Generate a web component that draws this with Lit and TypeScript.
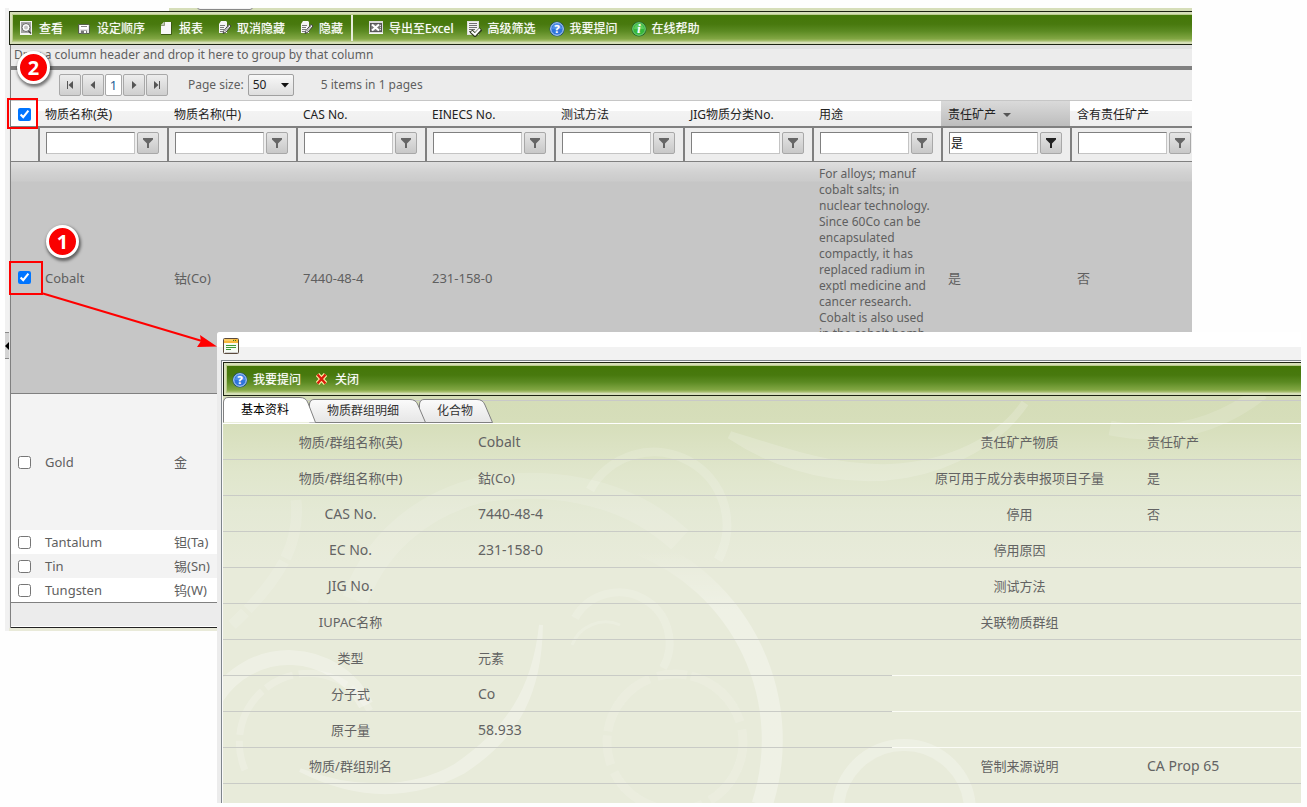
import { LitElement, html, svg, css, nothing, TemplateResult } from "lit";
import { customElement, property, state } from "lit/decorators.js";
import { classMap } from "lit/directives/class-map.js";

const ICONS: Record<string, TemplateResult> = {
  view: svg`
    <rect x="2" y="0" width="12" height="14" fill="#f4f4f4"/>
    <rect x="3" y="1" width="10" height="11" fill="#a4a4a4"/>
    <circle cx="8" cy="6.500" r="4" fill="#fff" stroke="#6a6a6a"/>
    <circle cx="8" cy="6.500" r="2" fill="#c4c4c4"/>
    <path d="M10.500 10l2.500 2.500" stroke="#444" stroke-width="1.400"/>`,
  save: svg`
    <path d="M2.500 3.500h10l1 1v8h-11z" fill="#e6e6e6" stroke="#55604a"/>
    <rect x="4" y="4" width="8" height="4" fill="#fff"/>
    <path d="M5 5.500h6" stroke="#888"/>
    <rect x="5" y="9.500" width="6" height="3" fill="#777"/>
    <rect x="8" y="10" width="2" height="2" fill="#fff"/>`,
  report: svg`
    <path d="M6 1h7v12H3V4z" fill="#f7f7f7"/>
    <path d="M3 4.500h3.500V1" fill="#bfc6b4" stroke="#7c8a66" stroke-width=".8"/>
    <path d="M13.500 1v12.500H3" fill="none" stroke="#3c5a14" stroke-width="1"/>`,
  edit: svg`
    <path d="M5 0h5l1 1v11H3V3z" fill="#f5f5f5"/>
    <path d="M4 4.500h5M4 6.500h4M4 8.500h4M4 10.500h3" stroke="#7b7b7b"/>
    <path d="M7 12.500l1-3 5-6 2 1.500-5 6z" fill="#fff" stroke="#333" stroke-width=".9"/>
    <path d="M9 10l4-5" stroke="#999"/>`,
  excel: svg`
    <rect x="1" y="0" width="14" height="13" fill="#dadada"/>
    <rect x="2.500" y="2.500" width="11" height="8" fill="#777" stroke="#555"/>
    <path d="M4 3.500l7 6M11 3.500l-7 6" stroke="#fff" stroke-width="2"/>
    <path d="M12 4.500h1M12 6.500h1M12 8.500h1" stroke="#ddd"/>
    <path d="M1 12.500h14" stroke="#f8f8f8"/>`,
  filter: svg`
    <rect x="1.500" y=".5" width="11" height="13" fill="#f3f3f3" stroke="#ddd"/>
    <path d="M3 2.500h8M3 4.500h8M3 6.500h8M3 8.500h6M3 10.500h3" stroke="#707070"/>
    <path d="M5 10l4 4 6-6" fill="none" stroke="#2e3b1e" stroke-width="4"/>
    <path d="M5.500 10.500l3.500 3 5-5.500" fill="none" stroke="#fff" stroke-width="2"/>`,
  help: svg`
    <circle cx="8" cy="8" r="7.500" fill="#1c4f83"/>
    <circle cx="8" cy="8" r="6.300" fill="#2f74dc" stroke="#c4dcfa"/>
    <path d="M3 8a5 5 0 0 1 10 0z" fill="#6ea8f5" opacity=".5"/>
    <text x="8" y="12" text-anchor="middle" class="glyph">?</text>`,
  info: svg`
    <circle cx="8" cy="8" r="7.500" fill="#1d6a2b"/>
    <circle cx="8" cy="8" r="6.300" fill="#35b83c" stroke="#8fdc8c" stroke-width=".8"/>
    <path d="M3 8a5 5 0 0 1 10 0z" fill="#7fe07c" opacity=".5"/>
    <text x="8" y="12" text-anchor="middle" class="glyph serif">i</text>`,
  close: svg`
    <path d="M3.500 2.500l8 9M11.500 2.500l-8 9" stroke="#fff3a0" stroke-width="4.600" />
    <path d="M3.500 2.500l8 9M11.500 2.500l-8 9" stroke="#d81c0c" stroke-width="2.400"/>`,
  window: svg`
    <rect x=".5" y=".5" width="15" height="15" rx="1" fill="#f7fbf5" stroke="#5b4a3c"/>
    <rect x="1" y="1" width="14" height="4" fill="#f7b93c"/>
    <path d="M1 2h9" stroke="#ffdf8d"/>
    <path d="M10 2.500h1M12 2.500h1" stroke="#3f7a1a"/>
    <path d="M3 7.500h10M3 9.500h10M3 11.500h5" stroke="#3c9a35"/>
    <path d="M2 14.500h13" stroke="#cfcfcf"/>`,
  first: svg`<path d="M5.500 4v8" stroke="#555" /><path d="M11 4v8L6.500 8z" fill="#555"/>`,
  prev: svg`<path d="M10 4v8L5.500 8z" fill="#555"/>`,
  next: svg`<path d="M6 4v8L10.500 8z" fill="#555"/>`,
  last: svg`<path d="M10.500 4v8" stroke="#555"/><path d="M5 4v8L9.500 8z" fill="#555"/>`,
  funnel: svg`<path d="M3 3h10v1.500L9 8.500V13H7V8.500L3 4.500z" fill="currentColor"/>`,
  sort: svg`<path d="M4 6h8l-4 4z" fill="#555"/>`,
  drop: svg`<path d="M4 6h8l-4 4.500z" fill="#111"/>`,
};

const icon = (name: string) => html`<svg class="icon" viewBox="0 0 16 16" width="16" height="16" aria-hidden="true">${ICONS[name]}</svg>`;

const FONT = css`
  * { box-sizing: border-box; }
  button, input, select { font: inherit; color: inherit; margin: 0; }
  .icon { display: block; flex: none; }
  .glyph { font: bold 11px "Open Sans", "Noto Sans", sans-serif; fill: #fff; }
  .glyph.serif { font: italic bold 12px "Liberation Serif", serif; }
`;

interface Tool { icon: string; label: string; }

@customElement("tool-bar")
export class ToolBar extends LitElement {
  @property({ attribute: false }) groups: Tool[][] = [];
  static styles = [FONT, css`
    :host { display: block; }
    .frame { border: 1px solid #1d2412; border-right: 0; background: #d6dfb8; padding: 2px 0 2px 2px; }
    .green {
      display: flex; align-items: stretch; height: 28px; overflow: hidden;
      border: 1px solid #b9cb8c; border-right: 0; padding-left: 5px;
      background: linear-gradient(#447708, #48790e 35%, #5b8a22 62%, #82a744 92%, #a9c070);
    }
    .group { display: flex; gap: 13px; }
    .group + .group { margin-left: 8px; padding-left: 15px; border-left: 2px solid #e8eddc; }
    button {
      display: flex; align-items: center; gap: 5px; padding: 1px 0 0; border: 0; background: none;
      color: #fff; font-size: 12px; line-height: 16px; white-space: nowrap; cursor: pointer;
      text-shadow: 0 0 1px rgba(255, 255, 255, 0.6);
    }
  `];
  render() {
    return html`<div class="frame"><div class="green" role="toolbar">
      ${this.groups.map((g) => html`<div class="group">
        ${g.map((t) => html`<button type="button">${icon(t.icon)}<span>${t.label}</span></button>`)}
      </div>`)}
    </div></div>`;
  }
}

interface Row { kind: string; en: string; cn: string; cas?: string; ec?: string; use?: string; duty?: string; has?: string; }

const COLUMNS = ["物质名称(英)", "物质名称(中)", "CAS No.", "EINECS No.", "测试方法", "JIG物质分类No.", "用途", "责任矿产", "含有责任矿产"];
const SORTED = 7;

const ROWS: Row[] = [
  {
    kind: "tall", en: "Cobalt", cn: "钴(Co)", cas: "7440-48-4", ec: "231-158-0", duty: "是", has: "否",
    use: "For alloys; manuf cobalt salts; in nuclear technology. Since 60Co can be encapsulated compactly, it has replaced radium in exptl medicine and cancer research. Cobalt is also used in the cobalt bomb",
  },
  { kind: "medium", en: "Gold", cn: "金" },
  { kind: "plain", en: "Tantalum", cn: "钽(Ta)" },
  { kind: "plain", en: "Tin", cn: "锡(Sn)" },
  { kind: "plain", en: "Tungsten", cn: "钨(W)" },
];

@customElement("substance-grid")
export class SubstanceGrid extends LitElement {
  @state() private picked = new Set<number>([0]);
  static styles = [FONT, css`
    :host { display: block; color: #5f5f5f; font-size: 13px; line-height: 16px; }
    .drop { height: 21px; padding: 2px 3px 0; background: linear-gradient(#e1e1e1 4px, #ececec 4px); white-space: nowrap; font-size: 12px; line-height: 16px; }
    .pager { display: flex; align-items: center; height: 35px; padding-left: 48px; border-top: 4px solid #808080; border-bottom: 1px solid #c6c6c6; background: #ececec; white-space: nowrap; }
    .pages { display: flex; gap: 1px; }
    .page { width: 22px; height: 22px; padding: 0 2px; border: 1px solid #a8a8a8; border-radius: 2px; background: linear-gradient(#ededed, #cfcfcf); }
    .page.now { width: 17px; padding: 0; background: #fff; color: #1e5f96; text-align: center; }
    .size { display: flex; align-items: center; gap: 4px; margin-left: 20px; font-size: 12px; }
    .pick { position: relative; width: 46px; height: 22px; }
    .pick select { width: 100%; height: 100%; padding: 0 4px; appearance: none; border: 1px solid #a0a0a0; border-radius: 2px; background: linear-gradient(#f8f8f8, #dedede); color: #222; font-size: 12px; }
    .pick .icon { position: absolute; right: 1px; top: 3px; pointer-events: none; }
    .count { margin-left: 27px; font-size: 12px; }
    .clip { overflow: hidden; }
    table { table-layout: fixed; border-collapse: separate; border-spacing: 0; width: 0; }
    .c-tick { width: 27px; }
    .c-data { width: 129px; }
    th, td { padding: 0 7px; text-align: left; font-weight: normal; vertical-align: middle; }
    .tick { padding: 0; text-align: center; }
    .tick input { display: block; width: 13px; height: 13px; margin: 0 7px; }
    .heads th { height: 27px; padding-top: 2px; border-bottom: 2px solid #808080; background: linear-gradient(#fff 0 10px, #f3f3f3 10px, #efefef); color: #222; font-size: 12px; white-space: nowrap; }
    .heads .tick { background: #fff; }
    .heads .sorted { background: linear-gradient(#dadada, #bdbdbd); }
    .label { display: flex; align-items: center; gap: 3px; }
    .filters td { height: 34px; padding: 0 6px 3px; border-left: 2px solid #808080; border-bottom: 1px solid #808080; background: #ededed; }
    .filters .tick { border-left: 0; }
    .filter { display: flex; gap: 2px; }
    .filter input { width: 89px; height: 22px; padding: 0 1px; border: 1px solid #c4c4c4; border-top-color: #808080; border-left-color: #808080; background: #fff; color: #111; font-size: 12px; }
    .filter button { width: 22px; height: 22px; padding: 0 2px; border: 1px solid #a8a8a8; border-radius: 2px; background: linear-gradient(#e6e6e6, #c8c8c8); color: #666; }
    .filter .on { color: #222; }
    .plain td { height: 24px; background: #fff; }
    .plain:nth-child(even) td { background: #f3f3f3; }
    .medium td { height: 136px; background: #f3f3f3; }
    .tall td { height: 232px; border-bottom: 1px solid #808080; background: linear-gradient(#dfdfdf, #d2d2d2 10px, #cbcbcb 19px, #c6c6c6 20px); }
    .tall .use { padding-top: 4px; vertical-align: top; font-size: 12px; }
    .foot { height: 26px; border-top: 1px solid #808080; border-bottom: 1px solid #222; background: #ececec; box-shadow: inset 0 -1px #fff; }
  `];
  private toggle(i: number) {
    const next = new Set(this.picked);
    next.has(i) ? next.delete(i) : next.add(i);
    this.picked = next;
  }
  render() {
    return html`
      <div class="drop">Drag a column header and drop it here to group by that column</div>
      <div class="pager">
        <div class="pages">
          <button class="page" type="button" aria-label="First">${icon("first")}</button>
          <button class="page" type="button" aria-label="Previous">${icon("prev")}</button>
          <button class="page now" type="button">1</button>
          <button class="page" type="button" aria-label="Next">${icon("next")}</button>
          <button class="page" type="button" aria-label="Last">${icon("last")}</button>
        </div>
        <div class="size">
          <label for="size">Page size:</label>
          <div class="pick"><select id="size"><option>50</option></select>${icon("drop")}</div>
        </div>
        <div class="count">5 items in 1 pages</div>
      </div>
      <div class="clip">
        <table>
          <colgroup><col class="c-tick">${COLUMNS.map(() => html`<col class="c-data">`)}</colgroup>
          <thead>
            <tr class="heads">
              <th class="tick"><input type="checkbox" aria-label="All" checked></th>
              ${COLUMNS.map((c, i) => html`<th class=${classMap({ sorted: i === SORTED })}>
                <span class="label">${c}${i === SORTED ? icon("sort") : nothing}</span></th>`)}
            </tr>
            <tr class="filters">
              <td class="tick"></td>
              ${COLUMNS.map((c, i) => html`<td><div class="filter">
                <input type="text" aria-label=${c} .value=${i === SORTED ? "是" : ""}>
                <button type="button" aria-label="Filter" class=${classMap({ on: i === SORTED })}>${icon("funnel")}</button>
              </div></td>`)}
            </tr>
          </thead>
          <tbody>
            ${ROWS.map((r, i) => html`<tr class=${r.kind}>
              <td class="tick"><input type="checkbox" aria-label=${r.en} .checked=${this.picked.has(i)} @change=${() => this.toggle(i)}></td>
              <td>${r.en}</td><td>${r.cn}</td><td>${r.cas}</td><td>${r.ec}</td><td></td><td></td>
              <td class="use">${r.use}</td><td>${r.duty}</td><td>${r.has}</td>
            </tr>`)}
          </tbody>
        </table>
      </div>
      <div class="foot"></div>`;
  }
}

interface Field { label: string; value?: string; }
const FIELDS: [Field, Field | null][] = [
  [{ label: "物质/群组名称(英)", value: "Cobalt" }, { label: "责任矿产物质", value: "责任矿产" }],
  [{ label: "物质/群组名称(中)", value: "鈷(Co)" }, { label: "原可用于成分表申报项目子量", value: "是" }],
  [{ label: "CAS No.", value: "7440-48-4" }, { label: "停用", value: "否" }],
  [{ label: "EC No.", value: "231-158-0" }, { label: "停用原因" }],
  [{ label: "JIG No." }, { label: "测试方法" }],
  [{ label: "IUPAC名称" }, { label: "关联物质群组" }],
  [{ label: "类型", value: "元素" }, null],
  [{ label: "分子式", value: "Co" }, null],
  [{ label: "原子量", value: "58.933" }, null],
  [{ label: "物质/群组别名" }, { label: "管制来源说明", value: "CA Prop 65" }],
];
const TABS = ["基本资料", "物质群组明细", "化合物"];

@customElement("detail-window")
export class DetailWindow extends LitElement {
  @state() private tab = 0;
  static styles = [FONT, css`
    :host { display: flex; flex-direction: column; background: #ececec; border-radius: 3px 0 0 0; overflow: hidden; color: #636363; }
    .title { height: 28px; padding: 6px; background: linear-gradient(#fff 0 15px, #f2f2f2 15px); flex: none; }
    .body { position: relative; flex: 1; margin-left: 4px; border: solid #7f868c; border-width: 1px 0 0 1px; padding: 1px 0 0 1px; background: #fafafa; overflow: hidden; display: flex; }
    .sheet { position: relative; flex: 1; min-width: 0; background: linear-gradient(#d3dbb4, #d6deba 60px, #e0e6cc 110px, #e4e9d5 150px, #e8ebda 200px); }
    .swirl { position: absolute; inset: 0; width: 100%; height: 100%; }
    .content { position: relative; }
    .tabs { display: flex; align-items: flex-end; height: 28px; border-bottom: 1px solid #fff; background: linear-gradient(#c9c9c9, #c9c9c9) 0 4px / 100% 1px no-repeat; }
    .tab { position: relative; height: 24px; padding: 0 20px 0 18px; border: 0; background: none; color: #333; font-size: 12px; line-height: 24px; white-space: nowrap; z-index: 1; }
    .tab:nth-child(1) { z-index: 3; }
    .tab:nth-child(2) { z-index: 2; }
    .tab:last-child { padding-right: 13px; }
    .tab.on { height: 26px; color: #000; }
    .tab .shape { position: absolute; left: 0; bottom: 0; overflow: visible; }
    .tab span { position: relative; }
    .form { width: 100%; table-layout: fixed; border-spacing: 0; font-size: 13px; line-height: 18px; }
    .form .c-label { width: 255px; }
    .form .c-left { width: 414px; }
    .form th, .form td { height: 36px; padding: 0; border-bottom: 1px solid #c9cbc6; font-weight: normal; white-space: nowrap; }
    .form td { text-align: left; }
    .form .void { border-bottom-color: #fbfcf6; }
    .form .latin { font-size: 14px; }
  `];
  private cell(text?: string) {
    return classMap({ latin: !!text && /^[\x20-\x7e]+$/.test(text) });
  }
  render() {
    return html`
      <div class="title">${icon("window")}</div>
      <div class="body"><div class="sheet">
        <svg class="swirl" aria-hidden="true">
          <defs>
            <linearGradient id="fade" gradientUnits="userSpaceOnUse" x1="0" y1="550" x2="0" y2="610">
              <stop offset="0" stop-color="#fff" stop-opacity="0"/><stop offset="1" stop-color="#fff"/>
            </linearGradient>
          </defs>
          <g transform="translate(-223 -362)" fill="none" stroke="#fff">
            <path d="M640 545A210 210 0 0 1 762 805" stroke="url(#fade)" stroke-width="21" opacity=".3"/>
            <path d="M215 700A86 86 0 0 1 366 705" stroke-width="15" opacity=".28"/>
            <path d="M541 625C540 690 520 735 463 772C410 800 355 798 300 770C350 790 410 792 455 766C508 730 534 690 541 625z" fill="#fff" stroke-width="4" opacity=".27"/>
            <circle cx="675" cy="742" r="68" stroke-width="9" stroke-dasharray="70 8 30 4" opacity=".13"/>
            <path d="M575 618A50 50 0 0 1 663 668" stroke-width="8" opacity=".15"/>
            <path d="M572 645A36 36 0 0 1 620 625" stroke-width="3" opacity=".15"/>
            <circle cx="904" cy="811" r="66" stroke-width="12" opacity=".24"/>
            <path d="M245 770A68 68 0 0 1 372 715" stroke-width="7" stroke-dasharray="30 6 50 5" opacity=".18"/>
            <path d="M296 500C300 540 285 575 232 625" stroke-width="11" stroke-dasharray="60 4" opacity=".12"/>
            <path d="M355 600C375 545 420 505 480 490C540 480 620 485 680 540" stroke-width="26" opacity=".12"/>
            <path d="M590 490A56 56 0 0 1 718 560" stroke-width="9" opacity=".15"/>
            <path d="M730 435C790 475 870 490 940 465C990 445 1010 425 1025 403C1000 440 950 465 890 468C830 470 780 450 730 435z" fill="#fff" stroke-width="8" opacity=".17"/>
            <path d="M1110 428C1170 440 1220 425 1262 392" stroke-width="15" opacity=".14"/>
            <path d="M920 365C870 400 780 395 720 372" stroke-width="8" opacity=".08"/>
          </g>
        </svg>
        <div class="content">
          <tool-bar .groups=${[[{ icon: "help", label: "我要提问" }, { icon: "close", label: "关闭" }]]}></tool-bar>
          <div class="tabs" role="tablist">
            ${TABS.map((t, i) => {
              const w = t.length * 12 + (i === TABS.length - 1 ? 31 : 38);
              const on = i === this.tab;
              const h = on ? 26 : 24;
              return html`<button class=${classMap({ tab: true, on })} type="button" role="tab" aria-selected=${on} @click=${() => (this.tab = i)}>
                <svg class="shape" width=${w} height=${h} aria-hidden="true">
                  <defs><linearGradient id="g" x1="0" y1="0" x2="0" y2="1"><stop offset="0" stop-color="#fbfbfb"/><stop offset="1" stop-color="#e6e6e6"/></linearGradient></defs>
                  <path d="M.5 ${h - 0.5}V5Q1 .5 5 .5H${w - 9}Q${w - 3} .5 ${w - 1} 6L${w + 6.5} ${h - 0.5}${on ? "" : "Z"}"
                    fill=${on ? "#fff" : "url(#g)"} stroke="#808080"/>
                </svg><span>${t}</span></button>`;
            })}
          </div>
          <table class="form">
            <colgroup><col class="c-label"><col class="c-left"><col class="c-label"><col></colgroup>
            <tbody>
              ${FIELDS.map(([a, b]) => html`<tr>
                <th scope="row" class=${this.cell(a.label)}>${a.label}</th><td class=${this.cell(a.value)}>${a.value}</td>
                ${b ? html`<th scope="row" class=${this.cell(b.label)}>${b.label}</th><td class=${this.cell(b.value)}>${b.value}</td>`
                    : html`<td class="void" colspan="2"></td>`}
              </tr>`)}
            </tbody>
          </table>
        </div>
      </div></div>`;
  }
}

@customElement("app-root")
export class AppRoot extends LitElement {
  static styles = [FONT, css`
    :host { display: block; position: relative; min-height: 100vh; overflow: hidden; background: #fefefe; font-family: "Noto Sans", "Noto Sans CJK SC", sans-serif; }
    .panel { display: flex; margin: 0 115px 0 5px; padding-top: 8px; }
    .rail { flex: none; width: 4px; position: relative; background: #f1f1f1; }
    .grip { position: absolute; top: 324px; left: 0; width: 4px; height: 27px; padding: 0; border: solid #8a8a8a; border-width: 1px 0; background: #d4d4d4; }
    .grip svg { display: block; }
    .main { flex: 1; min-width: 0; background: #ececec; }
    .crumbs { display: flex; height: 3px; background: #d6deb9; overflow: hidden; }
    .blank { width: 160px; background: #fefefe; }
    .nub { width: 56px; height: 6px; margin: -4px 0 0 28px; border: 1px solid #888; border-radius: 3px; background: #f4f4f4; }
    .grid { border-left: 1px solid #808080; margin-left: 1px; }
    .tail { height: 3px; background: #e9ead9; }
    detail-window { position: absolute; top: 332px; left: 217px; right: 6px; bottom: 4px; }
    .mark { position: absolute; border: 2px solid #f00; pointer-events: none; }
    .mark.all { left: 7px; top: 98px; width: 31px; height: 31px; }
    .mark.one { left: 9px; top: 261px; width: 34px; height: 34px; }
    .step { position: absolute; width: 33px; height: 33px; border: 3px solid #fff; border-radius: 50%; background: #fa0000; color: #fff; font: bold 20px/27px "Open Sans", sans-serif; text-align: center; box-shadow: 1px 2px 3px 1px rgba(0, 0, 0, 0.5); }
    .step.first { left: 46px; top: 225px; }
    .step.second { left: 17px; top: 51px; }
    .arrow { position: absolute; left: 0; top: 0; pointer-events: none; }
  `];
  private tools: Tool[][] = [
    [
      { icon: "view", label: "查看" }, { icon: "save", label: "设定顺序" }, { icon: "report", label: "报表" },
      { icon: "edit", label: "取消隐藏" }, { icon: "edit", label: "隐藏" },
    ],
    [
      { icon: "excel", label: "导出至Excel" }, { icon: "filter", label: "高级筛选" },
      { icon: "help", label: "我要提问" }, { icon: "info", label: "在线帮助" },
    ],
  ];
  render() {
    return html`
      <div class="panel">
        <div class="rail"><button class="grip" type="button" aria-label="Collapse"><svg width="4" height="25" aria-hidden="true"><path d="M4 9v8L0 13z" fill="#000"/></svg></button></div>
        <div class="main">
          <div class="crumbs"><div class="blank"></div><div class="nub"></div></div>
          <tool-bar .groups=${this.tools}></tool-bar>
          <substance-grid class="grid"></substance-grid>
          <div class="tail"></div>
        </div>
      </div>
      <detail-window></detail-window>
      <div class="mark all"></div>
      <div class="mark one"></div>
      <svg class="arrow" width="220" height="350" aria-hidden="true">
        <path d="M43 293.500L202 341" stroke="#f00" stroke-width="2"/>
        <path d="M217 346.500L197 347l4-6-1-6z" fill="#f00"/>
      </svg>
      <div class="step first">1</div>
      <div class="step second">2</div>`;
  }
}
